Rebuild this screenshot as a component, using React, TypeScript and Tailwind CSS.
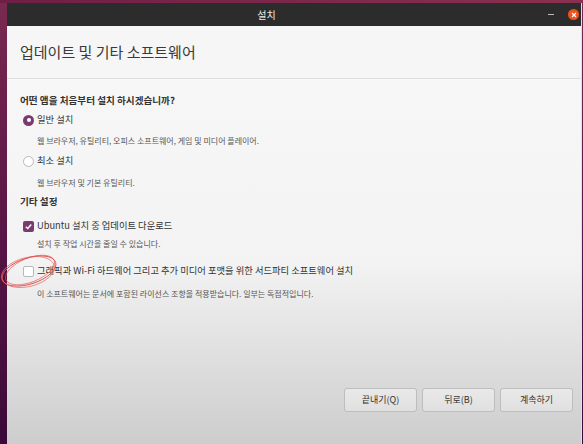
import React from "react";

const ko = { fontFamily: '"Noto Sans CJK KR", "Noto Sans", sans-serif' };

function Radio({ checked }: { checked?: boolean }) {
  return checked ? (
    <span className="flex h-[11px] w-[11px] items-center justify-center rounded-full bg-[#7b3b72]">
      <span className="h-[4px] w-[4px] rounded-full bg-white" />
    </span>
  ) : (
    <span className="h-[11px] w-[11px] rounded-full border border-[#b8b8b8] bg-white" />
  );
}

function Check({ checked }: { checked?: boolean }) {
  return checked ? (
    <span className="flex h-[11px] w-[11px] items-center justify-center rounded-[2px] bg-[#7b3b72]">
      <svg width="9" height="9" viewBox="0 0 10 10">
        <path d="M2 5.2 L4.2 7.3 L8 2.8" fill="none" stroke="white" strokeWidth="1.6" />
      </svg>
    </span>
  ) : (
    <span className="h-[11px] w-[11px] rounded-[2px] border border-[#b8b8b8] bg-white" />
  );
}

function Option({ icon, label, top }: { icon: React.ReactNode; label: string; top: string }) {
  return (
    <div className={`flex h-[14px] items-center gap-[3px] pl-[3px] text-[9.3px] text-[#333] ${top}`}>
      {icon}
      <span>{label}</span>
    </div>
  );
}

function Sub({ text, top }: { text: string; top: string }) {
  return (
    <div className={`h-[12px] pl-[17px] text-[8px] leading-[12px] text-[#555] ${top}`}>{text}</div>
  );
}

function Button({ label }: { label: string }) {
  return (
    <button className="h-[24px] w-[73px] rounded-[3px] border border-[#bdbdbd] bg-gradient-to-b from-[#e9e9e9] to-[#e0e0e0] text-[9px] text-[#333]">
      {label}
    </button>
  );
}

export default function App() {
  return (
    <div
      className="relative flex h-[444px] w-[583px] flex-col overflow-hidden bg-gradient-to-b from-[#7a2a50] via-[#5a1646] to-[#3b0a38]"
      style={ko}
    >
      <div className="h-[3px] w-full bg-gradient-to-r from-[#6e1f45] to-[#8a3050]" />
      <div className="ml-[7px] flex w-[575px] flex-1 flex-col border-r border-[#e2e2e2]">
        {/* TITLE BAR */}
        <div className="flex h-[23px] items-center bg-[#2c2c2c]">
          <div className="flex-1 pr-[22px] text-center text-[10px] text-[#eee]">설치</div>
          <div className="h-[1px] w-[6px] bg-[#bbb]" />
          <div className="ml-[14px] mr-[2px] flex h-[11px] w-[11px] items-center justify-center rounded-full bg-[#e9541f]">
            <svg width="6" height="6" viewBox="0 0 6 6">
              <path d="M1 1 L5 5 M5 1 L1 5" stroke="white" strokeWidth="1.2" />
            </svg>
          </div>
        </div>

        {/* HEADER */}
        <div className="flex h-[53px] items-center border-b border-[#dedede] bg-[#f6f6f6] pl-[13px]">
          <h1 className="text-[15px] text-[#3a3a3a]">업데이트 및 기타 소프트웨어</h1>
        </div>

        {/* BODY */}
        <div className="relative flex flex-1 flex-col bg-gradient-to-b from-[#f7f7f7] via-[#f3f3f3] to-[#cdcdcd] pl-[13px]">
          <div className="mt-[14px] h-[14px] text-[9.6px] font-bold leading-[14px] text-[#333]">
            어떤 앱을 처음부터 설치 하시겠습니까?
          </div>
          <Option icon={<Radio checked />} label="일반 설치" top="mt-[6px]" />
          <Sub text="웹 브라우저, 유틸리티, 오피스  소프트웨어, 게임 및 미디어 플레이어." top="mt-[8px]" />
          <Option icon={<Radio />} label="최소 설치" top="mt-[7px]" />
          <Sub text="웹 브라우저 및 기본 유틸리티." top="mt-[9px]" />
          <div className="mt-[5px] h-[14px] text-[9.6px] font-bold leading-[14px] text-[#333]">기타 설정</div>
          <Option icon={<Check checked />} label="Ubuntu 설치 중 업데이트 다운로드" top="mt-[11px]" />
          <Sub text="설치 후 작업 시간을 줄일 수 있습니다." top="mt-[5px]" />
          <Option
            icon={<Check />}
            label="그래픽과 Wi-Fi 하드웨어 그리고 추가 미디어 포맷을 위한 서드파티 소프트웨어 설치"
            top="mt-[14px]"
          />
          <Sub text="이 소프트웨어는 문서에 포함된 라이선스 조항을 적용받습니다. 일부는 독점적입니다." top="mt-[10px]" />

          <div className="mt-auto mb-[32px] mr-[8px] flex justify-end gap-[5px]">
            <Button label="끝내기(Q)" />
            <Button label="뒤로(B)" />
            <Button label="계속하기" />
          </div>
        </div>
      </div>

      {/* red marker annotation */}
      <svg className="absolute left-0 top-[249px]" width="66" height="46" viewBox="0 0 66 46">
        <ellipse cx="29" cy="22" rx="28" ry="13" transform="rotate(-18 29 22)" fill="none" stroke="#e0504f" strokeWidth="0.9" />
        <ellipse cx="28" cy="23" rx="27" ry="14.5" transform="rotate(-14 28 23)" fill="none" stroke="#e86a66" strokeWidth="0.7" />
        <ellipse cx="30" cy="21" rx="26" ry="12" transform="rotate(-22 30 21)" fill="none" stroke="#e0504f" strokeWidth="0.6" />
      </svg>
    </div>
  );
}
